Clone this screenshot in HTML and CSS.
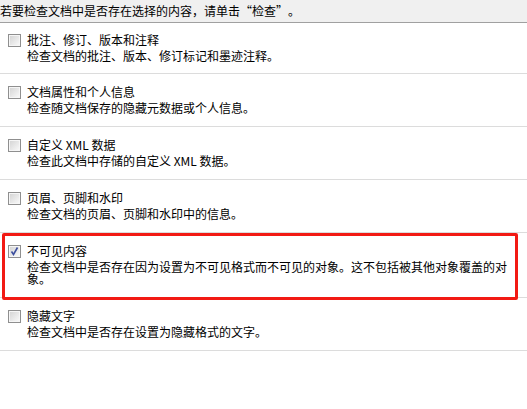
FILE: index.html
```html
<!DOCTYPE html>
<html lang="zh-CN">
<head>
    <meta charset="UTF-8">
    <meta name="viewport" content="width=device-width, initial-scale=1.0">
    <title>文档检查器</title>
    <link rel="stylesheet" href="styles.css">
</head>
<body>
    <div class="intro">若要检查文档中是否存在选择的内容，请单击<span class="wide">“</span>检查<span class="wide">”</span>。</div>
    <div class="list">
        <div class="row">
            <span class="box"></span>
            <div class="text">
                <div class="title">批注、修订、版本和注释</div>
                <div class="desc">检查文档的批注、版本、修订标记和墨迹注释。</div>
            </div>
        </div>
        <div class="row">
            <span class="box"></span>
            <div class="text">
                <div class="title">文档属性和个人信息</div>
                <div class="desc">检查随文档保存的隐藏元数据或个人信息。</div>
            </div>
        </div>
        <div class="row">
            <span class="box"></span>
            <div class="text">
                <div class="title">自定义 XML 数据</div>
                <div class="desc">检查此文档中存储的自定义 XML 数据。</div>
            </div>
        </div>
        <div class="row">
            <span class="box"></span>
            <div class="text">
                <div class="title">页眉、页脚和水印</div>
                <div class="desc">检查文档的页眉、页脚和水印中的信息。</div>
            </div>
        </div>
        <div class="row marked">
            <span class="box checked">
                <svg width="11" height="11" viewBox="0 0 11 11"><polyline points="2.5,5.5 4.5,8.5 8.5,1.5" fill="none" stroke="#3d4f9e" stroke-width="1.6"/></svg>
            </span>
            <div class="text">
                <div class="title">不可见内容</div>
                <div class="desc">检查文档中是否存在因为设置为不可见格式而不可见的对象。这不包括被其他对象覆盖的对象。</div>
            </div>
        </div>
        <div class="row">
            <span class="box"></span>
            <div class="text">
                <div class="title">隐藏文字</div>
                <div class="desc">检查文档中是否存在设置为隐藏格式的文字。</div>
            </div>
        </div>
    </div>
</body>
</html>
```

FILE: styles.css
```css
body {
    margin: 0;
    background-color: #fff;
    color: #000;
    font-family: "Noto Sans CJK SC", "Liberation Sans", sans-serif;
    font-size: 12px;
}
.intro {
    height: 22px;
    line-height: 21px;
    background-color: #f0f0f0;
    border-bottom: 1px solid #a0a0a0;
    white-space: nowrap;
    overflow: hidden;
}
.wide {
    display: inline-block;
    width: 12px;
    text-align: center;
}
.row {
    display: flex;
    padding: 11px 15px 12px 8px;
    border-bottom: 1px solid #dcdcdc;
}
.row:first-child {
    padding-top: 10px;
    padding-bottom: 11px;
}
.marked {
    position: relative;
}
.marked::after {
    content: "";
    position: absolute;
    top: 0;
    left: 2px;
    right: 9px;
    bottom: -3px;
    border: 3px solid #f21a14;
    border-radius: 2px;
}
.box {
    flex: none;
    width: 11px;
    height: 11px;
    margin: 1px 6px 0 0;
    border: 1px solid #8f8f8f;
    background: linear-gradient(135deg, #d2d2d2, #fbfbfb);
    box-shadow: inset 0 0 0 1px #f6f6f6;
}
.box svg {
    display: block;
}
.text {
    flex: 1;
    min-width: 0;
}
.title {
    line-height: 14px;
}
.desc {
    margin-top: 3px;
    line-height: 12px;
}
```
